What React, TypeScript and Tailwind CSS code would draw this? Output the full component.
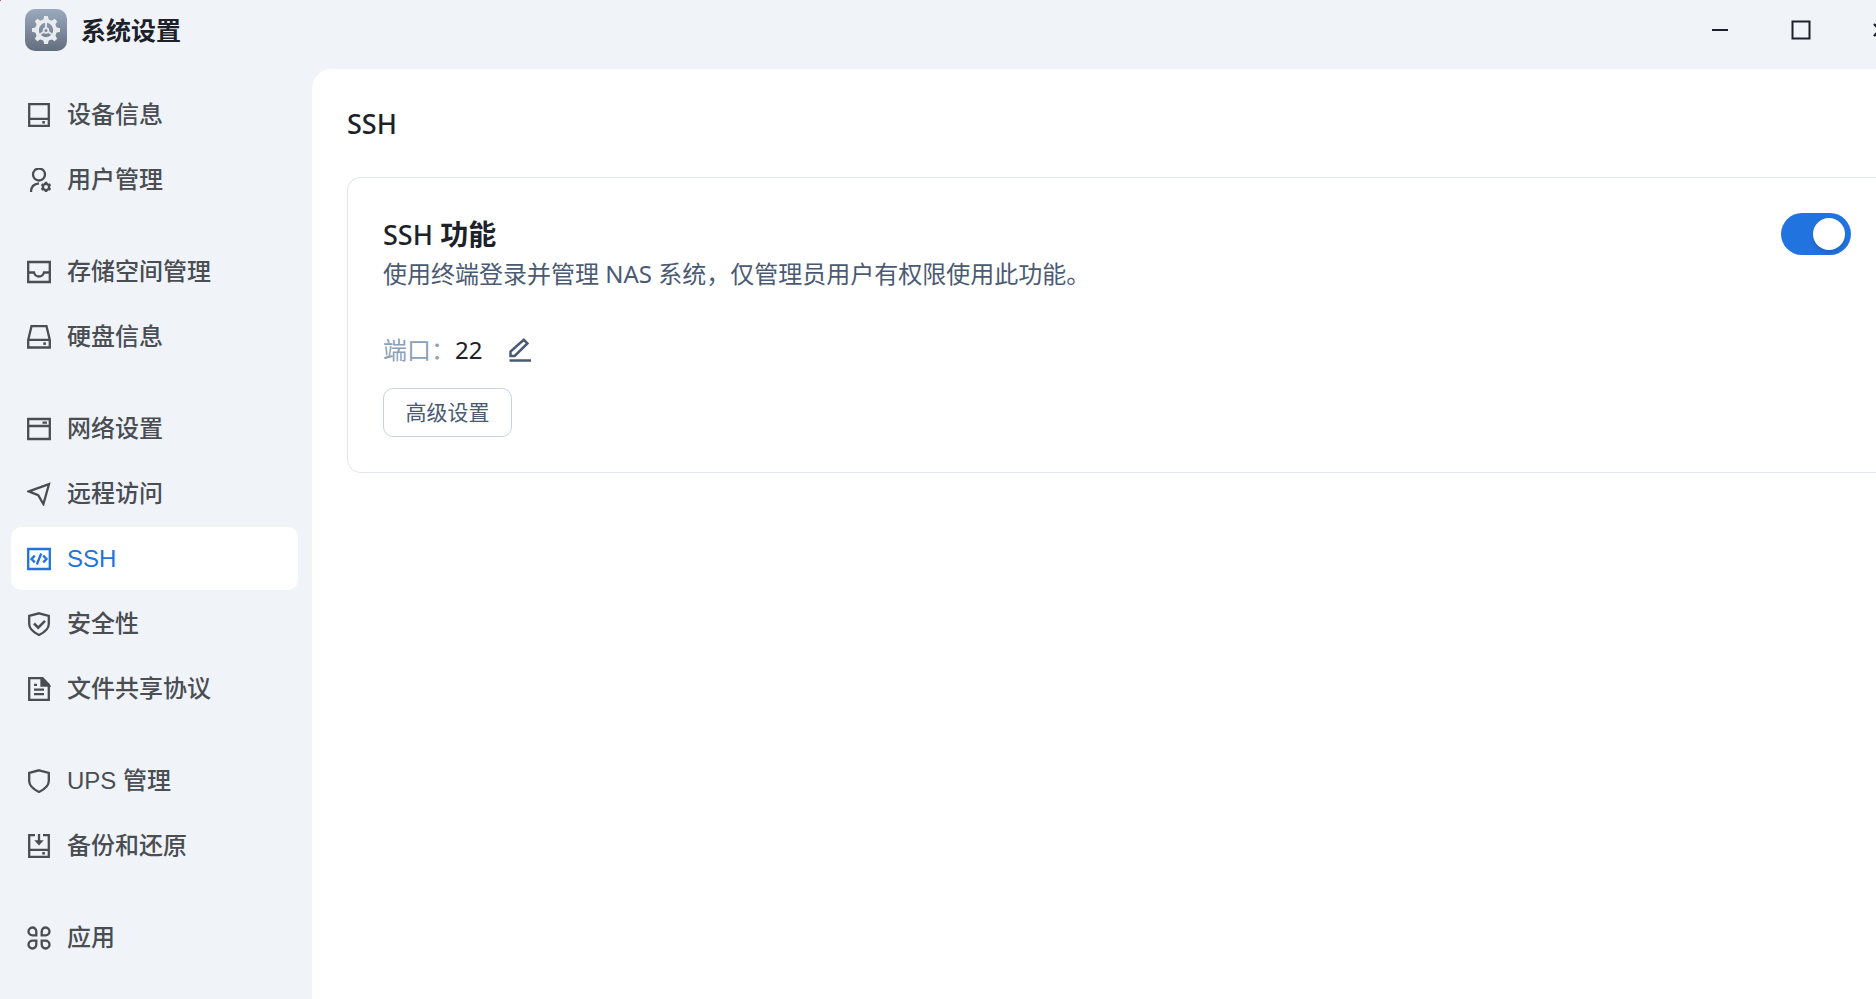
import { useState, type ReactNode } from 'react';

type NavItem = {
  id: string;
  label: string;
  icon: ReactNode;
};

function Icon({ children }: { children: ReactNode }) {
  return (
    <svg
      className="size-6 shrink-0"
      viewBox="0 0 24 24"
      fill="none"
      stroke="currentColor"
      strokeWidth="2.3"
      aria-hidden="true"
    >
      {children}
    </svg>
  );
}

const shieldPath = 'M12 1.3 21.8 3.8V12c0 5-3.600 8-9.800 11C5.800 20 2.200 17 2.200 12V3.800Z';

const navGroups: NavItem[][] = [
  [
    {
      id: 'device',
      label: '设备信息',
      icon: (
        <Icon>
          <path d="M2.200 1.200h19.600v21.600H2.200ZM2 15.800h20" />
          <path d="M15.300 18h2.600v2.600h-2.600z" fill="currentColor" stroke="none" />
        </Icon>
      ),
    },
    {
      id: 'users',
      label: '用户管理',
      icon: (
        <Icon>
          <circle cx="12" cy="6.500" r="6" />
          <path d="M4 24c0-5 3-8.200 8-8.600" />
          <circle cx="19" cy="19" r="3.100" />
          <path
            d="M19 13.800v2.200M19 22v2.200M14.500 16.400l1.900 1.100M21.600 20.500l1.900 1.100M14.500 21.600l1.900-1.100M21.600 17.500l1.900-1.100"
            strokeWidth="2.600"
          />
        </Icon>
      ),
    },
  ],
  [
    {
      id: 'storage',
      label: '存储空间管理',
      icon: (
        <Icon>
          <path d="M1.200 2h21.600v20H1.200Z" />
          <path d="M1 12.500h6c.8 2.600 2.600 4 5 4s4.200-1.400 5-4h6" />
        </Icon>
      ),
    },
    {
      id: 'disk',
      label: '硬盘信息',
      icon: (
        <Icon>
          <path d="M1.200 15 4.500 1.200h15L22.800 15v7.500H1.200ZM1 14.800h22" />
          <path d="M16.300 17.300h2.600v2.600h-2.600z" fill="currentColor" stroke="none" />
        </Icon>
      ),
    },
  ],
  [
    {
      id: 'network',
      label: '网络设置',
      icon: (
        <Icon>
          <path d="M1.200 2h21.600v20H1.200ZM1 9h22M15.500 5.600h4.500" />
        </Icon>
      ),
    },
    {
      id: 'remote',
      label: '远程访问',
      icon: (
        <Icon>
          <path d="M22 2.200 1.800 9.400l9.400 3.800 5.200 8.900Z" />
        </Icon>
      ),
    },
    {
      id: 'ssh',
      label: 'SSH',
      icon: (
        <Icon>
          <path d="M1.200 2h21.600v20H1.200Z" />
          <path d="M7.800 8.600 4.500 12l3.300 3.400M16.200 8.600l3.300 3.400-3.300 3.400M14.200 6.500l-4.400 11" />
        </Icon>
      ),
    },
    {
      id: 'security',
      label: '安全性',
      icon: (
        <Icon>
          <path d={shieldPath} />
          <path d="m7 11.500 4.200 4.200 6.800-6.800" strokeWidth="2.500" />
        </Icon>
      ),
    },
    {
      id: 'share',
      label: '文件共享协议',
      icon: (
        <Icon>
          <path d="M2.200 1.200h13.300l6.300 6.500v15.100H2.200Z" />
          <path d="M14.500 1.200v7.300h7.300Z" fill="currentColor" />
          <path d="M7 7.800h3M7 12.600h10M7 17.200h10" />
        </Icon>
      ),
    },
  ],
  [
    {
      id: 'ups',
      label: 'UPS 管理',
      icon: (
        <Icon>
          <path d={shieldPath} />
        </Icon>
      ),
    },
    {
      id: 'backup',
      label: '备份和还原',
      icon: (
        <Icon>
          <path d="M8 1.200H2.200v21.600h19.600V1.200H16M2 15.800h20M12 0v8" />
          <path d="M7.300 6.300h9.400L12 11.400z" fill="currentColor" stroke="none" />
          <path d="M15.300 18h2.600v2.600h-2.600z" fill="currentColor" stroke="none" />
        </Icon>
      ),
    },
  ],
  [
    {
      id: 'apps',
      label: '应用',
      icon: (
        <Icon>
          <path d="M9.300 9.300H5.500a3.900 3.900 0 1 1 3.800-3.900ZM14.700 9.300h3.800a3.900 3.900 0 1 0-3.800-3.900ZM9.300 14.700H5.500a3.900 3.900 0 1 0 3.800 3.900ZM14.700 14.700h3.800a3.900 3.900 0 1 1-3.800 3.900Z" />
        </Icon>
      ),
    },
  ],
];

function AppLogo() {
  const teeth = [0, 45, 90, 135, 180, 225, 270, 315];
  return (
    <svg className="size-[42px]" viewBox="0 0 42 42" aria-hidden="true">
      <defs>
        <linearGradient id="logo-bg" x1="0" y1="0" x2="0" y2="1">
          <stop offset="0" stopColor="#9aaabf" />
          <stop offset="1" stopColor="#636e7d" />
        </linearGradient>
      </defs>
      <rect width="42" height="42" rx="10" fill="url(#logo-bg)" />
      <g fill="#e9ebee">
        {teeth.map((angle) => (
          <path key={angle} d="M19.200 7h3.600l1 4h-5.600z" transform={`rotate(${angle} 21 21)`} />
        ))}
      </g>
      <circle cx="21" cy="21" r="9" fill="none" stroke="#e9ebee" strokeWidth="3.600" />
      <path d="M21 20v-7M20 22l-6 4M22 22l6 4" stroke="#e3e6ea" strokeWidth="2" />
      <circle cx="21" cy="21.500" r="2.400" fill="#7f8b9b" stroke="#e3e6ea" strokeWidth="1.800" />
    </svg>
  );
}

function WindowControls() {
  return (
    <div className="-mr-[46px] flex h-full shrink-0 text-[#1d2129]">
      <button aria-label="最小化" className="flex w-[81px] items-center justify-center">
        <svg className="size-5" viewBox="0 0 20 20" fill="none" stroke="currentColor" strokeWidth="2">
          <path d="M2 10h16" />
        </svg>
      </button>
      <button aria-label="最大化" className="flex w-[81px] items-center justify-center">
        <svg className="size-5" viewBox="0 0 20 20" fill="none" stroke="currentColor" strokeWidth="2">
          <path d="M1.500 1.500h17v17h-17z" />
        </svg>
      </button>
      <button aria-label="关闭" className="flex w-[81px] items-center justify-center pr-0.5">
        <svg className="size-5" viewBox="0 0 20 20" fill="none" stroke="currentColor" strokeWidth="2.4">
          <path d="m3 4 12 12M3 16 15 4" />
        </svg>
      </button>
    </div>
  );
}

export default function App() {
  const [active, setActive] = useState('ssh');
  const [enabled, setEnabled] = useState(true);

  return (
    <div className="relative flex min-h-screen flex-col overflow-hidden bg-[#f0f4f9] font-['Noto_Sans','Noto_Sans_CJK_SC',sans-serif]">
      <span className="absolute top-0 left-0 size-px bg-[#b04fb0]" />
      <header className="flex h-[69px] items-start justify-between pl-[25px]">
        <div className="flex h-[60px] items-center gap-3.5">
          <AppLogo />
          <h1 className="font-['Noto_Sans_CJK_SC',sans-serif] text-[25px] font-bold text-[#1d2129]">系统设置</h1>
        </div>
        <div className="h-[60px]">
          <WindowControls />
        </div>
      </header>

      <div className="flex flex-1">
        <nav className="flex w-[312px] shrink-0 flex-col gap-[29px] pt-3.5 pr-3.5 pl-[11px] font-['Liberation_Sans','Noto_Sans_CJK_SC',sans-serif]">
          {navGroups.map((group) => (
            <ul key={group[0].id} className="flex flex-col gap-0.5">
              {group.map((item) => (
                <li key={item.id}>
                  <button
                    onClick={() => setActive(item.id)}
                    className={`flex h-[63px] w-full items-center gap-4 rounded-[10px] pl-4 text-2xl font-medium ${
                      active === item.id ? 'bg-white text-[#2173df]' : 'text-[#4a4d52]'
                    }`}
                  >
                    {item.icon}
                    {item.label}
                  </button>
                </li>
              ))}
            </ul>
          ))}
        </nav>

        <main className="min-w-0 flex-1 rounded-tl-[20px] bg-white pt-[37px] pl-[35px]">
          <h2 className="text-[27px] leading-9 font-medium text-[#1d2129]">SSH</h2>

          <section className="mt-[35px] rounded-l-[14px] border-y border-l border-[#e2e7ef] pt-[35px] pr-[25px] pb-[35px] pl-[35px]">
            <div className="flex items-start justify-between">
              <div>
                <h3 className="text-[28px] leading-[43px] text-[#1d2129]">
                  <span className="text-[27px] font-medium">SSH</span> <span className="font-bold">功能</span>
                </h3>
                <p className="text-2xl leading-9 text-[#4b5a73]">
                  使用终端登录并管理 NAS 系统，仅管理员用户有权限使用此功能。
                </p>
              </div>
              <label className="relative block h-[42px] w-[70px] shrink-0 cursor-pointer">
                <input
                  type="checkbox"
                  role="switch"
                  aria-label="SSH 功能"
                  checked={enabled}
                  onChange={(e) => setEnabled(e.target.checked)}
                  className="peer size-full cursor-pointer appearance-none rounded-full bg-[#c5d0de] checked:bg-[#2173df]"
                />
                <span className="pointer-events-none absolute top-[5px] left-[7px] size-8 rounded-full bg-white shadow-md peer-checked:left-8" />
              </label>
            </div>

            <div className="mt-10 flex h-9 items-center text-2xl">
              <span className="text-[#8c9fba]">端口：</span>
              <span className="text-[#1d2129]">22</span>
              <button aria-label="编辑端口" className="ml-[26px] text-[#4b5a73]">
                <svg className="size-6" viewBox="0 0 24 24" fill="none" stroke="currentColor" strokeWidth="2.5">
                  <path d="M2.500 18v-4.500L15.800 1.800l3.600 3.600L6.700 18ZM1.500 22.600h21.500" />
                </svg>
              </button>
            </div>

            <button className="mt-5 h-[49px] w-[129px] rounded-[10px] border border-[#c8d3e0] text-[21px] text-[#4b5a73]">
              高级设置
            </button>
          </section>
        </main>
      </div>
    </div>
  );
}
